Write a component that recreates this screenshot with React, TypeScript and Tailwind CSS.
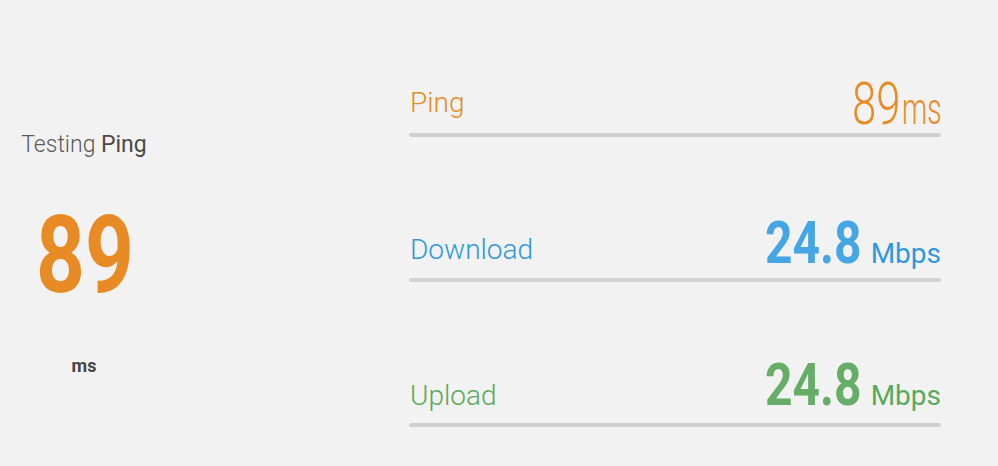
import React from "react";

function Squeezed({ text, className, width }: { text: string; className: string; width: string }) {
  // numbers in the picture use a condensed face; squeeze Roboto to match
  return (
    <span className={`inline-block whitespace-nowrap leading-none ${width}`}>
      <span className={`inline-block origin-left ${className}`}>{text}</span>
    </span>
  );
}

export default function App() {
  return (
    <div className="flex min-h-screen w-full justify-between bg-[#f2f2f2] pr-[57px] font-['Roboto',sans-serif]">
      {/* left: current test */}
      <div className="flex w-[168px] flex-col items-center pt-[133px]">
        <div className="text-[23px] leading-none text-[#5a5a5a] font-light">
          Testing <span className="font-normal text-[#4a4a4a]">Ping</span>
        </div>
        <div className="mt-[45px] flex justify-center text-[#e88b24]">
          <Squeezed text="89" width="w-[96px]" className="scale-x-[0.79] text-[108px] font-bold" />
        </div>
        <div className="mt-[48px] text-[18px] font-bold leading-none text-[#454545]">ms</div>
      </div>

      {/* right: results */}
      <div className="flex w-[532px] flex-col pt-[74px]">
        <div className="flex items-end justify-between">
          <span className="mb-[16px] pl-px text-[28px] font-light leading-none text-[#e88b24]">Ping</span>
          <div className="flex items-baseline text-[#e88b24]">
            <Squeezed text="89" width="w-[50px]" className="scale-x-[0.74] text-[59px] font-light" />
            <Squeezed text="ms" width="w-[39px]" className="scale-x-[0.63] text-[45px] font-light" />
          </div>
        </div>
        <div className="h-[4px] rounded-full bg-[#d0d0d0]" />

        <div className="mt-[76px] flex items-end justify-between">
          <span className="mb-[14px] pl-px text-[28px] font-light leading-none text-[#2f98e0]">Download</span>
          <div className="mb-[5px] flex items-baseline">
            <Squeezed text="24.8" width="w-[95px]" className="scale-x-[0.8] text-[60px] font-bold text-[#45a6e4]" />
            <span className="ml-[11px] text-[28px] leading-none text-[#2f98e0]">Mbps</span>
          </div>
        </div>
        <div className="h-[4px] rounded-full bg-[#d0d0d0]" />

        <div className="mt-[73px] flex items-end justify-between">
          <span className="mb-[13px] pl-px text-[28px] font-light leading-none text-[#5aa95b]">Upload</span>
          <div className="mb-[8px] flex items-baseline">
            <Squeezed text="24.8" width="w-[95px]" className="scale-x-[0.8] text-[60px] font-bold text-[#66ad68]" />
            <span className="ml-[11px] text-[28px] leading-none text-[#5aa95b]">Mbps</span>
          </div>
        </div>
        <div className="h-[4px] rounded-full bg-[#d0d0d0]" />
      </div>
    </div>
  );
}
